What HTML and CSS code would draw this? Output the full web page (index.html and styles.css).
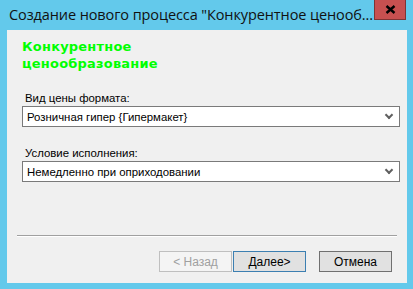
FILE: index.html
```html
<!DOCTYPE html>
<html lang="ru">
<head>
  <meta charset="UTF-8">
  <title>Создание нового процесса</title>
  <link rel="stylesheet" href="styles.css">
</head>
<body>
  <div class="titlebar">
    <span class="title">Создание нового процесса "Конкурентное ценооб...</span>
    <div class="close">
      <svg width="11" height="9" viewBox="0 0 11 9"><path d="M1.5 1 L9.5 8 M9.5 1 L1.5 8" stroke="#000" stroke-width="2.4"/></svg>
    </div>
  </div>
  <div class="panel">
    <h2 class="heading">Конкурентное<br>ценообразование</h2>
    <div class="field">
      <label>Вид цены формата:</label>
      <div class="combo"><span>Розничная гипер {Гипермакет}</span><i class="arrow"></i></div>
    </div>
    <div class="field">
      <label>Условие исполнения:</label>
      <div class="combo"><span>Немедленно при оприходовании</span><i class="arrow"></i></div>
    </div>
    <div class="sep"></div>
    <div class="buttons">
      <button class="btn disabled">&lt; Назад</button>
      <button class="btn default">Далее&gt;</button>
      <button class="btn cancel">Отмена</button>
    </div>
  </div>
</body>
</html>
```

FILE: styles.css
```css
body {
  margin: 0;
  width: 413px;
  height: 289px;
  background-color: #63c9eb;
  font-family: "Liberation Sans", Arial, sans-serif;
  overflow: hidden;
}
.titlebar {
  height: 30px;
  display: flex;
  align-items: flex-start;
  justify-content: space-between;
}
.title {
  font-family: "Open Sans", "Noto Sans", sans-serif;
  font-size: 14.5px;
  color: #111;
  margin: 5px 0 0 9px;
  white-space: nowrap;
  letter-spacing: -0.1px;
}
.close {
  width: 30px;
  height: 19px;
  margin-right: 7px;
  background-color: #c75050;
  border: 1px solid #7e3434;
  border-top: none;
  display: flex;
  align-items: center;
  justify-content: center;
}
.panel {
  margin: 0 6px 0 7px;
  height: 253px;
  background-color: #f0f0f0;
  display: flex;
  flex-direction: column;
}
.heading {
  margin: 8px 0 0 15px;
  font-family: "DejaVu Sans", sans-serif;
  font-size: 13px;
  line-height: 17px;
  letter-spacing: 0.2px;
  color: #00ff00;
  font-weight: bold;
}
.field {
  margin-left: 15px;
  width: 378px;
}
.field label {
  display: block;
  font-size: 11.4px;
  line-height: 14px;
  color: #000;
  margin: 19px 0 0 3px;
}
.combo {
  height: 19px;
  margin-top: 1px;
  border: 1px solid #7a7a7a;
  background-color: #fff;
  display: flex;
  align-items: center;
  justify-content: space-between;
  font-size: 11.4px;
  color: #000;
  padding-left: 4px;
}
.arrow {
  width: 4px;
  height: 4px;
  border-right: 2px solid #606060;
  border-bottom: 2px solid #606060;
  transform: rotate(45deg);
  margin: 0 7px 4px 0;
}
.sep {
  margin: 53px 0 0 10px;
  width: 380px;
  height: 1px;
  background-color: #a0a0a0;
  border-bottom: 1px solid #fff;
}
.buttons {
  display: flex;
  justify-content: flex-end;
  margin: 14px 15px 0 0;
}
.btn {
  width: 73px;
  height: 21px;
  padding: 0;
  font-family: "Liberation Sans", Arial, sans-serif;
  font-size: 12px;
  background-color: #e1e1e1;
  border: 1px solid #adadad;
  color: #000;
}
.btn.disabled {
  background-color: #f4f4f4;
  border-color: #bfbfbf;
  color: #a0a0a0;
}
.btn.default {
  margin-left: 1px;
  border-color: #3c7fb1;
}
.btn.cancel {
  margin-left: 13px;
  border-color: #707070;
}
```
